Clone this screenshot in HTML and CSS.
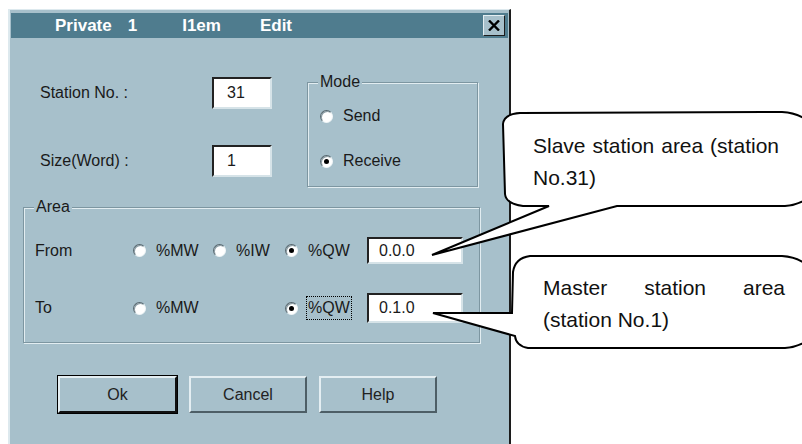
FILE: index.html
```html
<!DOCTYPE html>
<html lang="en">
<head>
    <meta charset="UTF-8">
    <meta name="viewport" content="width=device-width, initial-scale=1.0">
    <title>Private 1 Item Edit</title>
    <link rel="stylesheet" href="styles.css">
</head>
<body>
    <div class="dialog">
        <div class="titlebar">
            <span class="w1">Private</span>
            <span class="w2">1</span>
            <span class="w3">I1em</span>
            <span class="w4">Edit</span>
            <span class="close">
                <svg width="12" height="11" viewBox="0 0 12 11"><path d="M1 0.5 L11 10.5 M11 0.5 L1 10.5" stroke="#000" stroke-width="2.4"/></svg>
            </span>
        </div>

        <div class="top">
            <div class="fields">
                <span>Station No. :</span>
                <div class="field">31</div>
                <span>Size(Word) :</span>
                <div class="field">1</div>
            </div>
            <div class="group mode">
                <span class="legend">Mode</span>
                <div class="opt"><span class="radio"></span>Send</div>
                <div class="opt"><span class="radio on"></span>Receive</div>
            </div>
        </div>

        <div class="group area">
            <span class="legend">Area</span>
            <div class="arow first">
                <span>From</span>
                <div class="opt"><span class="radio"></span>%MW</div>
                <div class="opt"><span class="radio"></span>%IW</div>
                <div class="opt"><span class="radio on"></span>%QW</div>
                <div class="field small">0.0.0</div>
            </div>
            <div class="arow second">
                <span>To</span>
                <div class="opt"><span class="radio"></span>%MW</div>
                <span></span>
                <div class="opt"><span class="radio on"></span><span class="focus">%QW</span></div>
                <div class="field small">0.1.0</div>
            </div>
        </div>

        <div class="buttons">
            <button class="default">Ok</button>
            <button>Cancel</button>
            <button>Help</button>
        </div>
    </div>

    <svg class="callouts" width="802" height="444" viewBox="0 0 802 444">
        <path d="M520 113 L782 112 Q798 113 808 121 L808 198 Q798 205 785 206 L617 206 L432 255 L549 206 L523 206 Q506 204 505 194 L503 124 Q504 114 520 113 Z" fill="#fff" stroke="#000" stroke-width="2"/>
        <path d="M530 256 L782 256 Q798 257 808 266 L808 340 Q798 347 785 348 L528 348 Q516 346 515 336 L433 313 L512 313 L513 272 Q515 258 530 256 Z" fill="#fff" stroke="#000" stroke-width="2"/>
    </svg>
    <div class="note note1">Slave station area (station No.31)</div>
    <div class="note note2">Master station area (station No.1)</div>
</body>
</html>
```

FILE: styles.css
```css
body {
    margin: 0;
    background: #fff;
    font-family: "Liberation Sans", Arial, sans-serif;
    width: 802px;
    height: 444px;
    overflow: hidden;
    position: relative;
}
.dialog {
    margin: 9px 0 0 8px;
    width: 503px;
    height: 440px;
    box-sizing: border-box;
    background: #a7c0cb;
    border-top: 1px solid #dde9ee;
    border-left: 2px solid #dde9ee;
    border-right: 2px solid #1c1c1c;
    padding: 3px 1px 0 1px;
    font-size: 16px;
    color: #1a1a1a;
}
.titlebar {
    height: 25px;
    background: #4f7c8e;
    color: #fff;
    font-weight: bold;
    font-size: 17px;
    display: flex;
    align-items: center;
    padding-left: 44px;
}
.w2 { margin-left: 16px; }
.w3 { margin-left: 45px; }
.w4 { margin-left: 39px; }
.close {
    margin-left: auto;
    margin-right: 3px;
    width: 22px;
    height: 21px;
    box-sizing: border-box;
    background: #a7c0cb;
    border: 1px solid;
    border-color: #e4eef2 #1c1c1c #1c1c1c #e4eef2;
    display: flex;
    align-items: center;
    justify-content: center;
}
.top {
    display: flex;
    align-items: flex-start;
    margin-top: 39px;
    padding-left: 29px;
}
.fields {
    display: grid;
    grid-template-columns: 172px 60px;
    grid-template-rows: 32px 32px;
    row-gap: 36px;
    align-items: center;
}
.field {
    background: #fff;
    height: 100%;
    box-sizing: border-box;
    border: 2px solid;
    border-color: #222 #d6e3e8 #d6e3e8 #222;
    display: flex;
    align-items: center;
    padding-left: 13px;
}
.group {
    position: relative;
    box-sizing: border-box;
    border: 1px solid #7d96a1;
    box-shadow: 1px 1px 0 #e2edf1, inset 1px 1px 0 #e2edf1;
}
.legend {
    position: absolute;
    top: -9px;
    left: 10px;
    padding: 0 2px;
    line-height: 16px;
    background: #a7c0cb;
}
.mode {
    margin: 5px 0 0 35px;
    width: 171px;
    height: 105px;
    padding-top: 25px;
    display: flex;
    flex-direction: column;
    gap: 29px;
}
.opt {
    display: flex;
    align-items: center;
    line-height: 16px;
}
.mode .opt { padding-left: 12px; }
.radio {
    width: 13px;
    height: 13px;
    box-sizing: border-box;
    border-radius: 50%;
    background: #fff;
    border: 1px solid;
    border-color: #55666e #eef4f6 #eef4f6 #55666e;
    box-shadow: inset 1px 1px 0 #8a9ca4;
    margin-right: 10px;
    position: relative;
    flex-shrink: 0;
}
.radio.on::after {
    content: "";
    position: absolute;
    left: 3px;
    top: 3px;
    width: 5px;
    height: 5px;
    border-radius: 50%;
    background: #000;
}
.area {
    margin: 20px 0 0 12px;
    width: 457px;
    height: 136px;
    padding: 29px 0 0 11px;
}
.arow {
    display: grid;
    grid-template-columns: 98px 80px 72px 82px 96px;
    align-items: center;
}
.arow.first { height: 27px; }
.arow.second { height: 30px; margin-top: 29px; }
.field.small { padding-left: 10px; }
.focus {
    border: 1px dotted #000;
    padding: 3px 1px;
    margin-left: -2px;
}
.buttons {
    display: flex;
    gap: 12px;
    margin-top: 33px;
    padding-left: 47px;
}
button {
    width: 118px;
    height: 37px;
    font-family: inherit;
    font-size: 16px;
    color: #222;
    background: #a7c0cb;
    border: 2px solid;
    border-color: #e4eef2 #4d5e66 #4d5e66 #e4eef2;
    padding: 0;
}
button.default {
    width: 119px;
    outline: 1px solid #000;
    border-color: #e4eef2 #111 #111 #e4eef2;
}
.callouts {
    position: absolute;
    left: 0;
    top: 0;
}
.note {
    position: absolute;
    font-size: 21px;
    line-height: 32px;
    text-align: justify;
    color: #111;
}
.note1 {
    left: 533px;
    top: 130px;
    width: 246px;
}
.note2 {
    left: 543px;
    top: 272px;
    width: 242px;
}
```
